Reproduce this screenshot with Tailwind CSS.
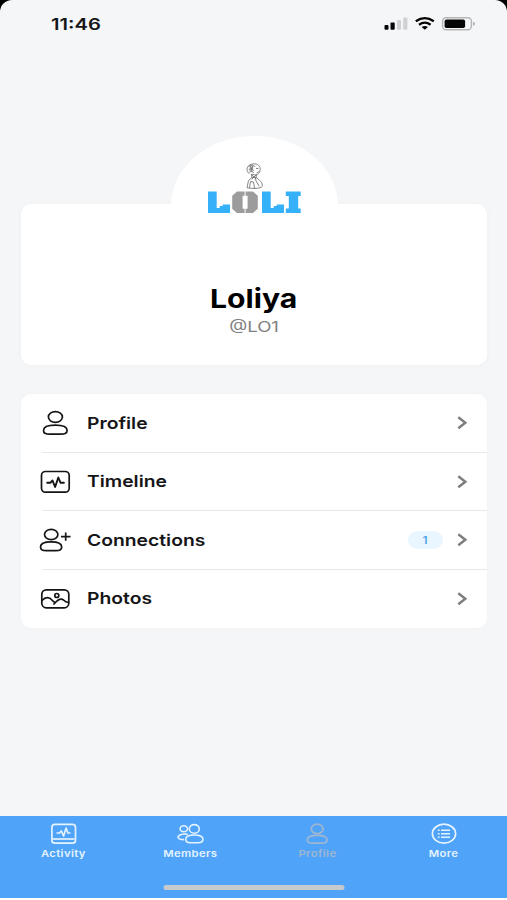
<!DOCTYPE html>
<html lang="en">
<head>
<meta charset="utf-8">
<title>Profile</title>
<script src="https://cdn.jsdelivr.net/npm/@tailwindcss/browser@4"></script>
</head>
<body class="bg-black font-['Inter','Liberation_Sans',sans-serif]">
<svg width="0" height="0" class="absolute">
  <defs>
    <symbol id="chevron" viewBox="0 0 10 14"><path d="M1.300 1.200 8.300 6.700l-7 5.500" fill="none" stroke="#7d7d7d" stroke-width="2.400"/></symbol>
  </defs>
</svg>
<div class="w-[507px] h-[900px] bg-[#f5f6f8] rounded-t-[12px] overflow-hidden flex flex-col">
  <header class="h-[48px] shrink-0 flex items-center justify-between pl-[50.500px] pr-[31px]">
    <span class="text-[16px] leading-[20px] font-semibold text-[#151517] inline-block origin-left scale-x-[1.26]">11:46</span>
    <svg width="92" height="16" viewBox="384 16 92 16">
      <g fill="#050505"><rect x="384.500" y="25" width="4" height="4.700" rx="1"/><rect x="390.500" y="22.600" width="4.200" height="7.100" rx="1"/></g>
      <g fill="#d0d1d3"><rect x="397" y="20" width="4" height="9.700" rx="1"/><rect x="403.200" y="17.500" width="4.200" height="12.200" rx="1"/></g>
      <g fill="none" stroke="#050505" stroke-width="2.300"><path d="M415.800 21.200q9-6.200 18 0"/><path d="M419 24.700q5.800-4.200 11.600 0"/></g>
      <path d="M421.600 27q3.200-2.200 6.400 0l-3.200 2.700z" fill="#050505"/>
      <rect x="442.600" y="17.700" width="28.800" height="12" rx="3.500" fill="none" stroke="#b4b5b7" stroke-width="1.400"/>
      <rect x="444.600" y="19.400" width="20.500" height="8.600" rx="1.800" fill="#050505"/>
      <path d="M473 21.700q2.200.6 2.200 2t-2.200 2z" fill="#b4b5b7"/>
    </svg>
  </header>
  <main class="flex-1 pt-[156px] pl-[21px] pr-[20px]">
    <section class="relative h-[161px] bg-white rounded-[10px] shadow-[0_0_6px_rgba(0,0,0,0.03)] flex flex-col items-center pt-[78px]">
      <div class="absolute left-[150px] top-[-68px] w-[167px] h-[140px] rounded-[50%] bg-white">
        <svg class="absolute left-[31px] top-[22px]" width="104" height="62" viewBox="202 158 104 62">
          <g fill="none" stroke="#777" stroke-width=".9" stroke-linecap="round" stroke-linejoin="round">
            <path d="M249 173.500c-3-2-2.700-7 1-8.700 4-2 9-.8 10 2.700.8 3-.5 6.500-3.500 7.300-2 .5-3-.5-4.500-.6"/>
            <path d="M248.500 166.500c2-1.800 5-1.800 6.500.2M249 169.500c2-1.500 3.500-.5 4.500.8m-4 1.700c1.500-1 3-.7 4 .5M256.500 168.500h1.500M257 172.500l1.500-.6M250.500 166l1.500 5.500M253 165.500l-1 3"/>
            <path d="M251.500 174.500l.5 3-3.500 3-1.500 7.300c5 .9 11 .8 14.300-.4 2.500-2.600.2-6.300-5.300-9.900l.5-3"/>
            <path d="M252 177.500h4M249.500 187.500l1-6 3 .5 1 6M255 179l4 7M252 175l4 4M256 175l-4 4"/>
          </g>
          <path d="M249.700 166.800l3.300-.6.500 3.300-2.500 2.500-1.600-1.600z" fill="#777" opacity=".55"/>
          <g fill="#35b1fa">
            <path d="M208 191.500h8.700v16.500h3v-2h3v-1.500h7.300v8.500h-22z"/>
            <path d="M262 191.500h8.700v16.500h3v-2h3v-1.500h7.300v8.500h-22z"/>
            <path d="M285.800 191.500h14.900v4.500h-2.500v12.500h2.500v4.500h-14.900v-4.500h3v-12.500h-3z"/>
          </g>
          <path fill="#9c9c9c" fill-rule="evenodd" d="M237 191.500h16l4.800 4.300v13l-4.800 4.200h-16l-4.800-4.200v-13zM242.600 195.800v13h5v-13z"/>
          <path stroke="#fff" stroke-width="1" d="M245.100 191v6M245.100 208v6"/>
        </svg>
      </div>
      <h1 class="text-[26px] leading-[34px] font-bold text-black scale-x-[1.16]">Loliya</h1>
      <p class="text-[15px] leading-[22px] text-[#818181] scale-x-[1.24]">@LO1</p>
    </section>
    <ul class="mt-[29px] h-[234px] bg-white rounded-[10px] shadow-[0_0_6px_rgba(0,0,0,0.02)] pl-[18px] grid grid-rows-4 text-[#151517]">
      <li class="relative flex items-center pr-[20px]">
        <svg class="w-8 h-[30px] shrink-0" viewBox="39 408 32 30" fill="none" stroke="currentColor" stroke-width="1.700"><ellipse cx="55.400" cy="417" rx="7" ry="5.400"/><path d="M55.300 425.200c7 0 11.800 1.900 11.800 5.200 0 2.700-2.800 3.800-6.500 3.800H50c-3.700 0-6.500-1.100-6.500-3.800 0-3.300 4.800-5.200 11.800-5.200z"/></svg>
        <span class="ml-[15.500px] text-[16.500px] font-semibold origin-left scale-x-[1.17]">Profile</span>
        <svg class="ml-auto w-[10px] h-[14px]"><use href="#chevron"/></svg>
        <i class="absolute left-[3px] right-0 bottom-0 h-px bg-[#e8e8ea]"></i>
      </li>
      <li class="relative flex items-center pr-[20px]">
        <svg class="w-8 h-[30px] shrink-0" viewBox="39 466.500 32 30" fill="none" stroke="currentColor" stroke-width="1.700"><rect x="41.500" y="471" width="27.700" height="20.700" rx="4"/><path stroke-linecap="round" stroke-linejoin="round" stroke-width="1.900" d="M47.200 482.200h3.300l2-2.200 2.600 6.500 3.200-9.500 2.200 5.200h3.400"/></svg>
        <span class="ml-[15.500px] text-[16.500px] font-semibold origin-left scale-x-[1.17]">Timeline</span>
        <svg class="ml-auto w-[10px] h-[14px]"><use href="#chevron"/></svg>
        <i class="absolute left-[3px] right-0 bottom-0 h-px bg-[#e8e8ea]"></i>
      </li>
      <li class="relative flex items-center pr-[20px]">
        <svg class="w-8 h-[30px] shrink-0" viewBox="39 525 32 30" fill="none" stroke="currentColor" stroke-width="1.700"><ellipse cx="51.200" cy="534.500" rx="6.700" ry="5.200"/><path d="M51.100 541.800c6.200 0 10.600 1.900 10.600 5.100 0 2.600-2.500 3.700-5.800 3.700h-9.600c-3.300 0-5.800-1.100-5.800-3.700 0-3.200 4.400-5.100 10.600-5.100z"/><path d="M61 536.600h9.500M65.700 532.400v8.400"/></svg>
        <span class="ml-[15.500px] text-[16.500px] font-semibold origin-left scale-x-[1.17]">Connections</span>
        <span class="ml-auto w-[35px] h-[18px] rounded-full bg-[#eaf6ff] text-[#50a5e9] text-[10px] font-semibold flex items-center justify-center"><span class="scale-x-[1.2]">1</span></span>
        <svg class="ml-[14px] w-[10px] h-[14px]"><use href="#chevron"/></svg>
        <i class="absolute left-[3px] right-0 bottom-0 h-px bg-[#e8e8ea]"></i>
      </li>
      <li class="flex items-center pr-[20px]">
        <svg class="w-8 h-[30px] shrink-0" viewBox="39 583.500 32 30" fill="none" stroke="currentColor" stroke-width="1.700"><rect x="41.800" y="589.300" width="27" height="18" rx="4.500"/><circle cx="56.800" cy="595" r="2"/><path stroke-linecap="round" stroke-linejoin="round" d="M42 600c3.500-4 7.500-3.500 10.200-.2l3 2.500M54 603.500c4-4.800 7-6 9.500-4 2 2 3 2.300 5 2.500"/></svg>
        <span class="ml-[15.500px] text-[16.500px] font-semibold origin-left scale-x-[1.17]">Photos</span>
        <svg class="ml-auto w-[10px] h-[14px]"><use href="#chevron"/></svg>
      </li>
    </ul>
  </main>
  <nav class="h-[82px] shrink-0 bg-[#4fa3f9] text-[#e4f3ff] flex flex-col items-center">
    <div class="w-full h-[46px] grid grid-cols-4 text-[9.500px] leading-[12px] font-semibold tracking-[0.3px] pt-[6px]">
      <div class="flex flex-col items-center">
        <svg width="30" height="24" viewBox="48.500 822 30 24" fill="none" stroke="currentColor" stroke-width="1.700"><rect x="52.400" y="824.400" width="23.600" height="18.800" rx="3"/><path d="M53 839h22"/><path stroke-linejoin="round" d="M57 833h3l1.800-2 2.300 5 2.500-8 1.800 5H71"/></svg>
        <span class="mt-[2px] translate-x-[0.5px] scale-x-[1.19]">Activity</span>
      </div>
      <div class="flex flex-col items-center">
        <svg width="30" height="24" viewBox="175.200 822 30 24" fill="none" stroke="currentColor" stroke-width="1.600"><ellipse cx="184" cy="828.800" rx="3.700" ry="3"/><ellipse cx="194.500" cy="828.900" rx="5" ry="4.300"/><path d="M194.500 835c5.200 0 8.600 1.700 8.600 4.300 0 2.500-2 3.500-4.600 3.500h-8c-2.600 0-4.600-1-4.600-3.500 0-2.600 3.400-4.300 8.600-4.300z"/><path d="M188 834.400c-5-1.200-9.700.4-9.700 2.900 0 1.700 2.500 2.300 6 2.300"/></svg>
        <span class="mt-[2px] translate-x-[0.5px] scale-x-[1.19]">Members</span>
      </div>
      <div class="flex flex-col items-center text-[#9fb7d0]">
        <svg width="30" height="24" viewBox="302 822 30 24" fill="none" stroke="currentColor" stroke-width="1.700"><ellipse cx="317.200" cy="828.900" rx="5.900" ry="4.700"/><path d="M317.200 835.300c6 0 9.900 1.700 9.900 4.400 0 2.500-2.200 3.500-5.400 3.500h-9c-3.200 0-5.400-1-5.400-3.500 0-2.700 3.900-4.400 9.900-4.400z"/></svg>
        <span class="mt-[2px] translate-x-[0.5px] scale-x-[1.19]">Profile</span>
      </div>
      <div class="flex flex-col items-center">
        <svg width="30" height="24" viewBox="428.700 822 30 24" fill="none" stroke="currentColor" stroke-width="1.700"><ellipse cx="443.700" cy="833.700" rx="11.600" ry="9.500"/><path stroke-width="1.500" d="M437.500 830.200h1.800M437.500 833.800h1.800M437.500 837.300h1.800M440.700 830.200h9M440.700 833.800h9M440.700 837.300h9"/></svg>
        <span class="mt-[2px] scale-x-[1.19]">More</span>
      </div>
    </div>
    <div class="mt-[23px] w-[181px] h-[5px] translate-x-[0.500px] rounded-full bg-[#c6cacd]"></div>
  </nav>
  <div class="h-[2px] shrink-0 bg-white"></div>
</div>
</body>
</html>
